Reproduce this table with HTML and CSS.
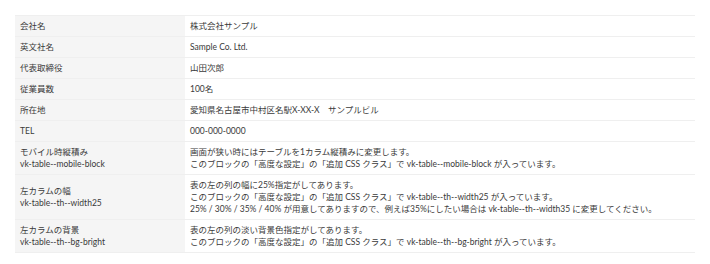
FILE: index.html
```html
<!DOCTYPE html>
<html lang="ja">
<head>
<meta charset="utf-8">
<link rel="stylesheet" href="styles.css">
</head>
<body>
<table class="vk-table">
  <tbody>
    <tr><th>会社名</th><td>株式会社サンプル</td></tr>
    <tr><th>英文社名</th><td>Sample Co. Ltd.</td></tr>
    <tr><th>代表取締役</th><td>山田次郎</td></tr>
    <tr><th>従業員数</th><td>100名</td></tr>
    <tr><th>所在地</th><td>愛知県名古屋市中村区名駅X-XX-X　サンプルビル</td></tr>
    <tr><th>TEL</th><td>000-000-0000</td></tr>
    <tr><th>モバイル時縦積み<br>vk-table--mobile-block</th><td>画面が狭い時にはテーブルを1カラム縦積みに変更します。<br>このブロックの「高度な設定」の「追加 CSS クラス」で vk-table--mobile-block が入っています。</td></tr>
    <tr><th>左カラムの幅<br>vk-table--th--width25</th><td>表の左の列の幅に25%指定がしてあります。<br>このブロックの「高度な設定」の「追加 CSS クラス」で vk-table--th--width25 が入っています。<br>25% / 30% / 35% / 40% が用意してありますので、例えば35%にしたい場合は vk-table--th--width35 に変更してください。</td></tr>
    <tr><th>左カラムの背景<br>vk-table--th--bg-bright</th><td>表の左の列の淡い背景色指定がしてあります。<br>このブロックの「高度な設定」の「追加 CSS クラス」で vk-table--th--bg-bright が入っています。</td></tr>
  </tbody>
</table>
</body>
</html>
```
FILE: styles.css
```css
html, body {
  margin: 0;
  background: #fff;
}
body {
  padding: 15px;
  font-family: Lato, "Noto Sans CJK JP", sans-serif;
  font-size: 8.5px;
  line-height: 12px;
  color: #3a3a3a;
}
.vk-table {
  width: 680px;
  border-collapse: collapse;
  border-spacing: 0;
}
.vk-table th,
.vk-table td {
  padding: 4px 5px;
  border-top: 1px solid #efefef;
  border-bottom: 1px solid #efefef;
  text-align: left;
  vertical-align: middle;
  font-weight: normal;
}
.vk-table th {
  width: 160px;
  background: #f5f5f5;
}
```
